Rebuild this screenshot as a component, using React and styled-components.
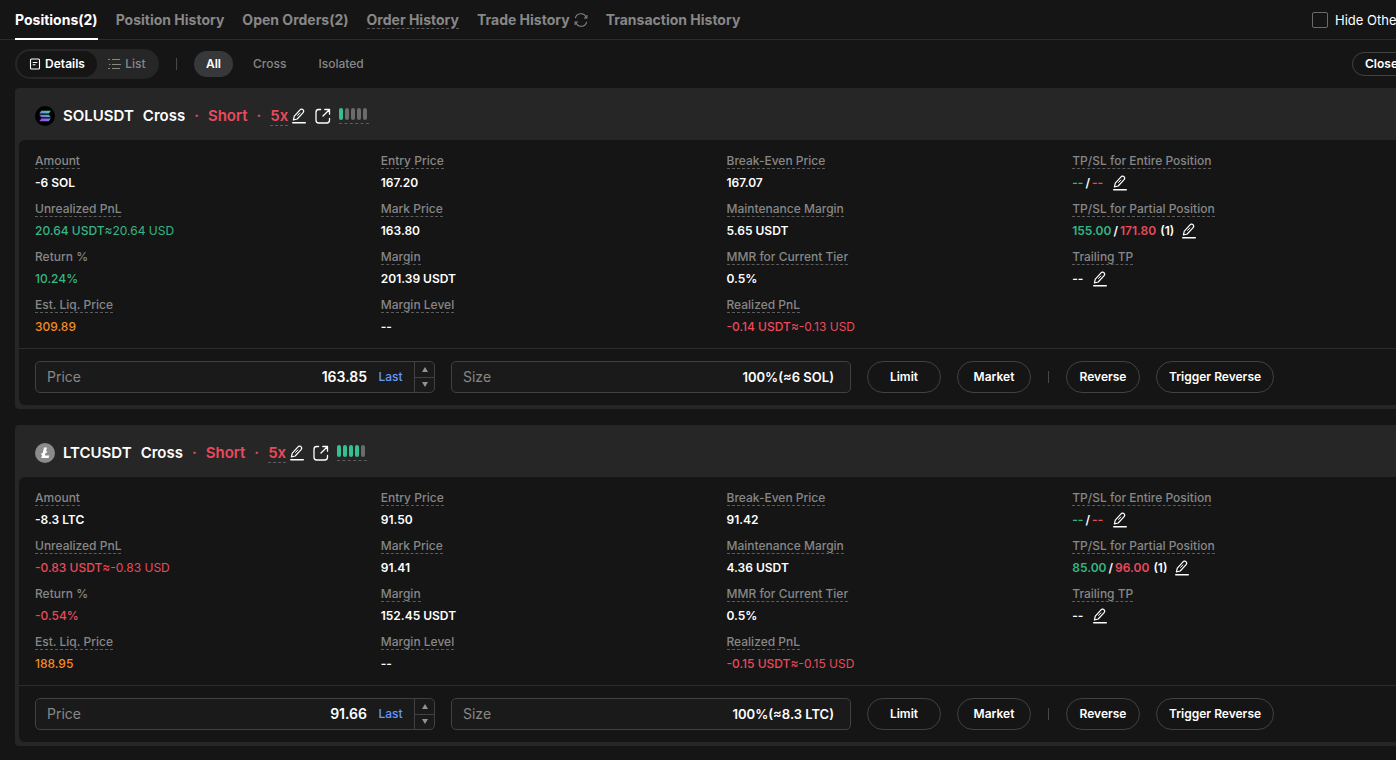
import React from "react";
import styled, { createGlobalStyle } from "styled-components";

const c = {
  bg: "#151515",
  panel: "#262626",
  field: "#1a1a1a",
  line: "#2c2c2c",
  border: "#414141",
  text: "#ffffff",
  muted: "#878787",
  green: "#35b585",
  red: "#ea4a5c",
  orange: "#f68b1f",
  blue: "#639bff",
};

const GlobalStyle = createGlobalStyle`
  * { box-sizing: border-box; }
  body {
    margin: 0;
    background: ${c.bg};
    color: ${c.text};
    font: 500 12px/20px Inter, "Liberation Sans", sans-serif;
  }
  button, input { font: inherit; color: inherit; margin: 0; }
  button { padding: 0; border: 0; background: none; cursor: pointer; white-space: nowrap; }
  svg { display: block; flex: none; }
`;

const Page = styled.div`
  min-height: 100vh;
  overflow-x: hidden;
`;

const Sheet = styled.main`
  min-width: 1453px;
`;

const TabBar = styled.nav`
  display: flex;
  gap: 18px;
  height: 40px;
  padding: 0 15px;
  border-bottom: 1px solid ${c.line};
`;

const Tab = styled.button`
  display: flex;
  align-items: center;
  gap: 4px;
  height: 40px;
  padding-top: 2px;
  font-size: 14px;
  font-weight: 700;
  color: ${(p) => (p.$active ? c.text : c.muted)};
  border-bottom: 2px solid ${(p) => (p.$active ? c.text : "transparent")};
`;

const Hint = styled.span`
  border-bottom: 1px dashed #5c5c5c;
`;

const HideOthers = styled.label`
  display: flex;
  align-items: center;
  gap: 7px;
  margin-left: auto;
  width: 126px;
  height: 39px;
  font-size: 13px;
  font-weight: 400;
  white-space: nowrap;
`;

const Checkbox = styled.input`
  appearance: none;
  flex: none;
  width: 16px;
  height: 16px;
  border: 1px solid #6a6a6a;
  border-radius: 2px;
`;

const Toolbar = styled.div`
  display: flex;
  align-items: center;
  height: 48px;
  padding: 0 15px;
`;

const Segmented = styled.div`
  display: flex;
  align-items: center;
  width: 144px;
  height: 30px;
  padding: 2px;
  border-radius: 15px;
  background: ${c.panel};
`;

const Segment = styled.button`
  display: flex;
  align-items: center;
  justify-content: center;
  gap: 4px;
  height: 26px;
  width: ${(p) => (p.$active ? 80 : 60)}px;
  border-radius: 13px;
  font-weight: ${(p) => (p.$active ? 600 : 500)};
  background: ${(p) => (p.$active ? c.bg : "transparent")};
  color: ${(p) => (p.$active ? c.text : c.muted)};
`;

const Separator = styled.span`
  width: 1px;
  height: 12px;
  margin: 0 ${(p) => p.$space || 0}px;
  background: #484848;
`;

const FilterGroup = styled.div`
  display: flex;
  gap: 8px;
`;

const Filter = styled.button`
  height: 26px;
  padding: 0 12px;
  border-radius: 13px;
  font-weight: ${(p) => (p.$active ? 600 : 500)};
  background: ${(p) => (p.$active ? "#363839" : "transparent")};
  color: ${(p) => (p.$active ? c.text : c.muted)};
`;

const PillButton = styled.button`
  height: 32px;
  min-width: 74px;
  padding: 0 12px;
  border: 1px solid ${c.border};
  border-radius: 16px;
  font-weight: 600;
`;

const CloseAll = styled(PillButton)`
  width: 86px;
  height: 24px;
  margin-left: auto;
  text-align: left;
`;

const CardList = styled.div`
  display: flex;
  flex-direction: column;
  gap: 16px;
  padding: 0 15px;
`;

const Card = styled.section`
  padding: 0 4px 4px;
  border-radius: 4px;
  background: ${c.panel};
`;

const CardHeader = styled.header`
  display: flex;
  align-items: center;
  height: 52px;
  padding: 4px 16px 0;
`;

const Title = styled.h2`
  display: flex;
  gap: 9px;
  margin: 0 4px 0 8px;
  font-size: 15px;
  line-height: 20px;
  font-weight: 600;
`;

const Side = styled.span`
  display: flex;
  gap: 9px;
  color: ${c.red};
`;

const IconButton = styled.button`
  margin-right: ${(p) => p.$after || 0}px;
`;

const RiskMeter = styled.span`
  display: flex;
  gap: 2px;
  width: 30px;
  padding-bottom: 3px;
  border-bottom: 1px dashed #5c5c5c;
`;

const RiskBar = styled.span`
  width: 4px;
  height: 12px;
  border-radius: 2px;
  background: ${(p) => (p.$on ? "#35c090" : "#6b6b6b")};
`;

const CardBody = styled.div`
  border-radius: 6px;
  background: ${c.bg};
`;

const Stats = styled.dl`
  display: grid;
  grid-template-columns: repeat(4, 1fr);
  row-gap: 4px;
  margin: 0;
  padding: 8px 16px 12px;
`;

const Stat = styled.div`
  height: 44px;
`;

const StatLabel = styled.dt`
  line-height: 26px;
  color: ${c.muted};
`;

const StatValue = styled.dd`
  display: flex;
  align-items: center;
  margin: 0;
  height: 18px;
  font-weight: ${(p) => (p.$tone ? 500 : 600)};
  color: ${(p) => c[p.$tone] || c.text};
`;

const Part = styled.span`
  display: flex;
  align-items: center;
  color: ${(p) => c[p.$tone] || "inherit"};
  font-weight: ${(p) => (p.$light ? 400 : "inherit")};
  margin: 0 ${(p) => p.$space || 0}px;
`;

const OrderForm = styled.form`
  display: flex;
  align-items: center;
  gap: 16px;
  padding: 12px 16px;
  border-top: 1px solid ${c.line};
`;

const Field = styled.div`
  display: flex;
  align-items: center;
  width: 400px;
  height: 32px;
  padding-left: 11px;
  border: 1px solid ${c.border};
  border-radius: 5px;
  background: ${c.field};
  font-size: 14px;
`;

const FieldLabel = styled.label`
  font-weight: 400;
  color: ${c.muted};
`;

const FieldInput = styled.input`
  flex: 1;
  min-width: 0;
  padding: 0;
  border: 0;
  outline: 0;
  background: none;
  text-align: right;
  font-size: ${(p) => (p.$small ? 13 : 14)}px;
  font-weight: 600;
  margin-right: ${(p) => p.$end}px;
`;

const LastButton = styled.button`
  width: 25px;
  margin-right: 11px;
  font-size: 12px;
  color: ${c.blue};
`;

const Stepper = styled.div`
  display: flex;
  flex-direction: column;
  width: 20px;
  height: 30px;
  border-left: 1px solid ${c.border};
`;

const Step = styled.button`
  display: flex;
  align-items: center;
  justify-content: center;
  flex: 1;
  & + & { border-top: 1px solid ${c.border}; }
`;

const EditIcon = () => (
  <svg width="14" height="16" viewBox="0 0 14 16" fill="none" stroke="#fff" strokeWidth="1.2" strokeLinejoin="round" strokeLinecap="round">
    <path d="M1.4 12 2.3 8.2 7.8 2.1C8.8 1 10.2 .8 11 1.6C11.9 2.5 11.8 3.8 10.9 4.9L5.2 11Z" />
    <path d="M5.6 7.4 7.8 5" strokeWidth="1" />
    <path d="M.7 14.8H13.3" strokeWidth="1.4" />
  </svg>
);

const ShareIcon = () => (
  <svg width="16" height="16" viewBox="0 0 16 16" fill="none" stroke="#fff" strokeWidth="1.3" strokeLinejoin="round" strokeLinecap="round">
    <path d="M5.6 1.5H3.7A2.7 2.7 0 0 0 1 4.2V12.3A2.7 2.7 0 0 0 3.7 15H11.8A2.7 2.7 0 0 0 14.5 12.3V10.4" />
    <path d="M9.8 1.5H14.5V6.2M14.3 1.7 8 8" />
  </svg>
);

const RefreshIcon = () => (
  <svg width="14" height="14" viewBox="0 0 14 14" fill="none" stroke={c.muted} strokeWidth="1.1">
    <path d="M1.4 5.2A5.6 5.6 0 0 1 12.2 4.6M12.6 8.8A5.6 5.6 0 0 1 1.8 9.4" />
    <path d="M12.9 2V5H10M1.1 12V9H4" />
  </svg>
);

const DetailsIcon = () => (
  <svg width="12" height="12" viewBox="0 0 12 12" fill="none" stroke="#fff" strokeWidth="1.1">
    <rect x="1.5" y="1" width="9" height="10" rx="1" />
    <path d="M3.7 4.5H8.3M3.7 6.8H6.5" />
  </svg>
);

const ListIcon = () => (
  <svg width="13" height="12" viewBox="0 0 13 12" fill="none" stroke={c.muted} strokeWidth="1">
    <path d="M0 1.5H2M4 1.5H12M1 6.5H2.5M4 6.5H13M0 10.5H2M4 10.5H12" />
  </svg>
);

const Arrow = ({ up }) => (
  <svg width="6" height="5" viewBox="0 0 6 5" fill="#929292">
    <path d={up ? "M3 0 6 5H0Z" : "M3 5 0 0H6Z"} />
  </svg>
);

const SolLogo = () => (
  <svg width="20" height="20" viewBox="0 0 20 20">
    <defs>
      <linearGradient id="sol" x1="15" y1="4" x2="6" y2="16" gradientUnits="userSpaceOnUse">
        <stop offset="0.1" stopColor="#2fe0a8" />
        <stop offset="0.5" stopColor="#6d8bd8" />
        <stop offset="1" stopColor="#a044f0" />
      </linearGradient>
    </defs>
    <circle cx="10" cy="10" r="10" fill="#000" />
    <path fill="url(#sol)" d="M6.3 4.8H15.8L13.8 7.4H4.3ZM4.3 8.7H13.8L15.8 11.3H6.3ZM6.3 12.6H15.8L13.8 15.2H4.3Z" />
  </svg>
);

const LtcLogo = () => (
  <svg width="20" height="20" viewBox="0 0 20 20">
    <circle cx="10" cy="10" r="10" fill="#8b8b8b" />
    <path fill="#fff" d="M9 4.5H12L10.9 8.6 12.3 8 11.9 9.6 10.4 10.3 9.8 12.6H14.2L13.6 15H6.3L7.2 11.6 5.9 12.1 6.3 10.5 7.7 9.9Z" />
  </svg>
);

const dash = { parts: [["--"]] };

const positions = [
  {
    symbol: "SOLUSDT",
    Logo: SolLogo,
    risk: 1,
    price: "163.85",
    size: "100%(≈6 SOL)",
    stats: [
      { label: "Amount", parts: [["-6 SOL"]] },
      { label: "Entry Price", parts: [["167.20"]] },
      { label: "Break-Even Price", parts: [["167.07"]] },
      { label: "TP/SL for Entire Position", parts: [["--", "green"], ["/", "text", 2], ["--", "red"]], edit: true },
      { label: "Unrealized PnL", tone: "green", parts: [["20.64 USDT"]], approx: "≈20.64 USD" },
      { label: "Mark Price", parts: [["163.80"]] },
      { label: "Maintenance Margin", parts: [["5.65 USDT"]] },
      { label: "TP/SL for Partial Position", parts: [["155.00", "green"], ["/", "text", 2], ["171.80", "red"]], count: "(1)", edit: true },
      { label: "Return %", plain: true, tone: "green", parts: [["10.24%"]] },
      { label: "Margin", parts: [["201.39 USDT"]] },
      { label: "MMR for Current Tier", parts: [["0.5%"]] },
      { label: "Trailing TP", ...dash, edit: true },
      { label: "Est. Liq. Price", tone: "orange", parts: [["309.89"]] },
      { label: "Margin Level", ...dash },
      { label: "Realized PnL", tone: "red", parts: [["-0.14 USDT"]], approx: "≈-0.13 USD" },
    ],
  },
  {
    symbol: "LTCUSDT",
    Logo: LtcLogo,
    risk: 4,
    price: "91.66",
    size: "100%(≈8.3 LTC)",
    stats: [
      { label: "Amount", parts: [["-8.3 LTC"]] },
      { label: "Entry Price", parts: [["91.50"]] },
      { label: "Break-Even Price", parts: [["91.42"]] },
      { label: "TP/SL for Entire Position", parts: [["--", "green"], ["/", "text", 2], ["--", "red"]], edit: true },
      { label: "Unrealized PnL", tone: "red", parts: [["-0.83 USDT"]], approx: "≈-0.83 USD" },
      { label: "Mark Price", parts: [["91.41"]] },
      { label: "Maintenance Margin", parts: [["4.36 USDT"]] },
      { label: "TP/SL for Partial Position", parts: [["85.00", "green"], ["/", "text", 2], ["96.00", "red"]], count: "(1)", edit: true },
      { label: "Return %", plain: true, tone: "red", parts: [["-0.54%"]] },
      { label: "Margin", parts: [["152.45 USDT"]] },
      { label: "MMR for Current Tier", parts: [["0.5%"]] },
      { label: "Trailing TP", ...dash, edit: true },
      { label: "Est. Liq. Price", tone: "orange", parts: [["188.95"]] },
      { label: "Margin Level", ...dash },
      { label: "Realized PnL", tone: "red", parts: [["-0.15 USDT"]], approx: "≈-0.15 USD" },
    ],
  },
];

function StatCell({ label, plain, tone, parts, approx, count, edit }) {
  return (
    <Stat>
      <StatLabel>{plain ? label : <Hint>{label}</Hint>}</StatLabel>
      <StatValue $tone={tone}>
        {parts.map(([text, partTone, space], i) => (
          <Part key={i} $tone={partTone} $space={space}>{text}</Part>
        ))}
        {approx && <Part $light>{approx}</Part>}
        {count && <Part $space={4}>{count}</Part>}
        {edit && (
          <Part $space={count ? 4 : 10}>
            <IconButton type="button" aria-label={`Edit ${label}`}><EditIcon /></IconButton>
          </Part>
        )}
      </StatValue>
    </Stat>
  );
}

function PositionCard({ symbol, Logo, risk, price, size, stats }) {
  return (
    <Card>
      <CardHeader>
        <Logo />
        <Title>
          <span>{symbol}</span>
          <span>Cross</span>
          <Side>
            <span>·</span>
            <span>Short</span>
            <span>·</span>
            <span><Hint>5x</Hint></span>
          </Side>
        </Title>
        <IconButton type="button" aria-label="Edit leverage" $after={9}><EditIcon /></IconButton>
        <IconButton type="button" aria-label="Share position" $after={8}><ShareIcon /></IconButton>
        <RiskMeter>
          {[0, 1, 2, 3, 4].map((i) => <RiskBar key={i} $on={i < risk} />)}
        </RiskMeter>
      </CardHeader>
      <CardBody>
        <Stats>
          {stats.map((s) => <StatCell key={s.label} {...s} />)}
        </Stats>
        <OrderForm onSubmit={(e) => e.preventDefault()}>
          <Field>
            <FieldLabel htmlFor={`${symbol}-price`}>Price</FieldLabel>
            <FieldInput id={`${symbol}-price`} defaultValue={price} $end={11} />
            <LastButton type="button">Last</LastButton>
            <Stepper>
              <Step type="button" aria-label="Increase price"><Arrow up /></Step>
              <Step type="button" aria-label="Decrease price"><Arrow /></Step>
            </Stepper>
          </Field>
          <Field>
            <FieldLabel htmlFor={`${symbol}-size`}>Size</FieldLabel>
            <FieldInput id={`${symbol}-size`} defaultValue={size} $small $end={16} />
          </Field>
          <PillButton type="button">Limit</PillButton>
          <PillButton type="button">Market</PillButton>
          <Separator $space={1} />
          <PillButton type="button">Reverse</PillButton>
          <PillButton type="button">Trigger Reverse</PillButton>
        </OrderForm>
      </CardBody>
    </Card>
  );
}

export default function App() {
  return (
    <Page>
      <GlobalStyle />
      <Sheet>
        <TabBar>
          <Tab $active>Positions(2)</Tab>
          <Tab>Position History</Tab>
          <Tab>Open Orders(2)</Tab>
          <Tab><span><Hint>Order History</Hint></span></Tab>
          <Tab>Trade History<RefreshIcon /></Tab>
          <Tab>Transaction History</Tab>
          <HideOthers>
            <Checkbox type="checkbox" />
            Hide Other Pairs
          </HideOthers>
        </TabBar>
        <Toolbar>
          <Segmented>
            <Segment $active><DetailsIcon />Details</Segment>
            <Segment><ListIcon />List</Segment>
          </Segmented>
          <Separator $space={17} />
          <FilterGroup>
            <Filter $active>All</Filter>
            <Filter>Cross</Filter>
            <Filter>Isolated</Filter>
          </FilterGroup>
          <CloseAll>Close All</CloseAll>
        </Toolbar>
        <CardList>
          {positions.map((p) => <PositionCard key={p.symbol} {...p} />)}
        </CardList>
      </Sheet>
    </Page>
  );
}
